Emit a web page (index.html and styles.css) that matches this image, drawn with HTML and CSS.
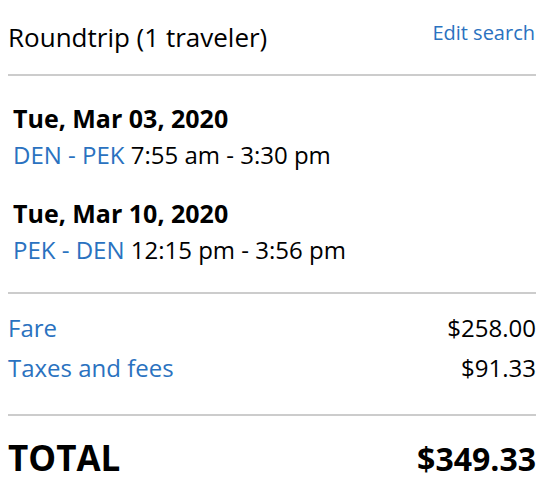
FILE: index.html
```html
<!DOCTYPE html>
<html>
<head>
<meta charset="utf-8">
<link rel="stylesheet" href="styles.css">
</head>
<body>
<div class="summary">
  <div class="head">
    <div class="title">Roundtrip (1 traveler)</div>
    <a class="edit" href="#">Edit search</a>
  </div>
  <div class="flights">
    <div class="flight">
      <div class="date">Tue, Mar 03, 2020</div>
      <div class="route"><span class="blue">DEN - PEK</span> 7:55 am - 3:30 pm</div>
    </div>
    <div class="flight">
      <div class="date">Tue, Mar 10, 2020</div>
      <div class="route"><span class="blue">PEK - DEN</span> 12:15 pm - 3:56 pm</div>
    </div>
  </div>
  <div class="prices">
    <div class="row"><span class="blue">Fare</span><span>$258.00</span></div>
    <div class="row"><span class="blue">Taxes and fees</span><span>$91.33</span></div>
  </div>
  <div class="total">
    <span class="total-label">TOTAL</span>
    <span class="total-value">$349.33</span>
  </div>
</div>
</body>
</html>
```
FILE: styles.css
```css
html, body {
  margin: 0;
  padding: 0;
  background: #fff;
}
body {
  font-family: "Open Sans", "DejaVu Sans", sans-serif;
  color: #000;
}
.summary {
  width: 528px;
  margin-left: 8px;
}
.blue {
  color: #2a72c0;
}
.head {
  display: flex;
  justify-content: space-between;
  align-items: flex-start;
  padding-top: 20px;
  height: 76px;
  box-sizing: border-box;
  border-bottom: 2px solid #cccccc;
}
.title {
  font-size: 26px;
  line-height: 34px;
}
.edit {
  font-size: 20px;
  line-height: 26px;
  color: #2a72c0;
  text-decoration: none;
  margin-right: 1px;
}
.flights {
  padding: 24px 0 23px 5px;
  border-bottom: 2px solid #cccccc;
}
.flight + .flight {
  margin-top: 21px;
}
.date {
  font-weight: 700;
  font-size: 25px;
  line-height: 36px;
}
.route {
  font-size: 24px;
  line-height: 38px;
}
.prices {
  padding: 14px 0 26px;
  border-bottom: 2px solid #cccccc;
}
.row {
  display: flex;
  justify-content: space-between;
  font-size: 24px;
  line-height: 40px;
}
.total {
  display: flex;
  justify-content: space-between;
  align-items: baseline;
  padding-top: 18px;
  font-weight: 700;
}
.total-label {
  font-size: 35px;
}
.total-value {
  font-size: 32px;
}
```
